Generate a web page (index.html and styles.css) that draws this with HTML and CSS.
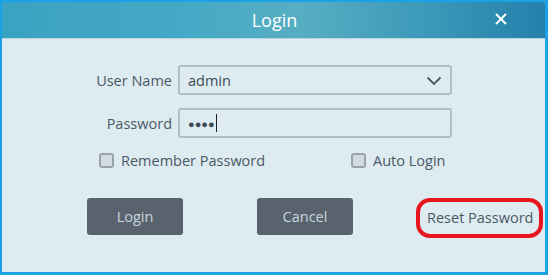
FILE: index.html
```html
<!DOCTYPE html>
<html lang="en">
<head>
<meta charset="UTF-8" />
<title>Login</title>
<link rel="stylesheet" href="styles.css">
</head>
<body>

<div class="dialog">
  <div class="titlebar">
    <span class="title">Login</span>
    <svg class="close" width="12" height="12" viewBox="0 0 12 12"><path d="M1 1 L11 11 M11 1 L1 11" stroke="#fff" stroke-width="2"/></svg>
  </div>

  <div class="content">
    <div class="row">
      <label class="label">User Name</label>
      <div class="field">
        <span class="value">admin</span>
        <svg class="chevron" width="16" height="10" viewBox="0 0 16 10"><path d="M1.5 1.5 L8 8 L14.5 1.5" fill="none" stroke="#4a5866" stroke-width="1.8"/></svg>
      </div>
    </div>
    <div class="row">
      <label class="label">Password</label>
      <div class="field">
        <span class="dots">&#9679;&#9679;&#9679;&#9679;</span><span class="caret"></span>
      </div>
    </div>

    <div class="checks">
      <label class="check remember"><span class="box"></span>Remember Password</label>
      <label class="check"><span class="box"></span>Auto Login</label>
    </div>

    <div class="buttons">
      <button class="btn">Login</button>
      <button class="btn">Cancel</button>
      <span class="reset">Reset Password</span>
    </div>
  </div>
</div>

</body>
</html>
```

FILE: styles.css
```css
html, body {
  margin: 0;
  padding: 0;
}
body {
  background: #1ba2e6;
  width: 548px;
  height: 275px;
  font-family: 'Open Sans', 'Noto Sans', sans-serif;
  padding: 2px 3px 3px 2px;
  box-sizing: border-box;
}
.dialog {
  height: 270px;
  background: #deebf0;
  border-top-right-radius: 3px;
  overflow: hidden;
}
.titlebar {
  height: 36px;
  background: linear-gradient(to right, #3aa2c1 0%, #46a9c5 35%, #57aec3 55%, #3a97b8 80%, #2480aa 100%);
  border-bottom: 1px solid #b9d6e0;
  position: relative;
  display: flex;
  align-items: center;
  justify-content: center;
  color: #fff;
}
.title {
  font-size: 18px;
  margin-left: 2px;
}
.close {
  position: absolute;
  right: 38px;
  top: 11px;
}
.content {
  padding: 26px 0 0 0;
}
.row {
  display: flex;
  align-items: center;
  margin-bottom: 13px;
}
.label {
  width: 170px;
  text-align: right;
  padding-right: 6px;
  font-size: 14.5px;
  color: #4a5968;
}
.field {
  box-sizing: border-box;
  width: 274px;
  height: 30px;
  border: 2px solid #b1bec6;
  border-radius: 3px;
  display: flex;
  align-items: center;
  padding-left: 8px;
  font-size: 14.5px;
  color: #3c4a56;
  position: relative;
}
.chevron {
  position: absolute;
  right: 8px;
  top: 9px;
}
.dots {
  font-size: 11px;
  color: #3c4a56;
}
.caret {
  width: 1px;
  height: 18px;
  background: #222;
  margin-left: 1px;
}
.checks {
  display: flex;
  margin: 1px 0 0 97px;
}
.check {
  display: flex;
  align-items: center;
  font-size: 14.5px;
  color: #4a5968;
}
.remember {
  width: 252px;
}
.box {
  width: 11px;
  height: 11px;
  border: 2px solid #98a3ab;
  border-radius: 3px;
  background: #d2dbe0;
  margin-right: 7px;
}
.buttons {
  display: flex;
  align-items: center;
  margin: 25px 0 0 85px;
}
.btn {
  width: 96px;
  height: 37px;
  border: none;
  border-radius: 3px;
  background: #58636e;
  color: #c9d5de;
  font-family: inherit;
  font-size: 14.5px;
  margin-right: 74px;
}
.reset {
  white-space: nowrap;
  margin-left: -11px;
  margin-top: 3px;
  font-size: 14.5px;
  color: #4a5968;
  border: 4px solid #e8141e;
  border-radius: 14px;
  padding: 6px 6px 7px 7px;
}
```
